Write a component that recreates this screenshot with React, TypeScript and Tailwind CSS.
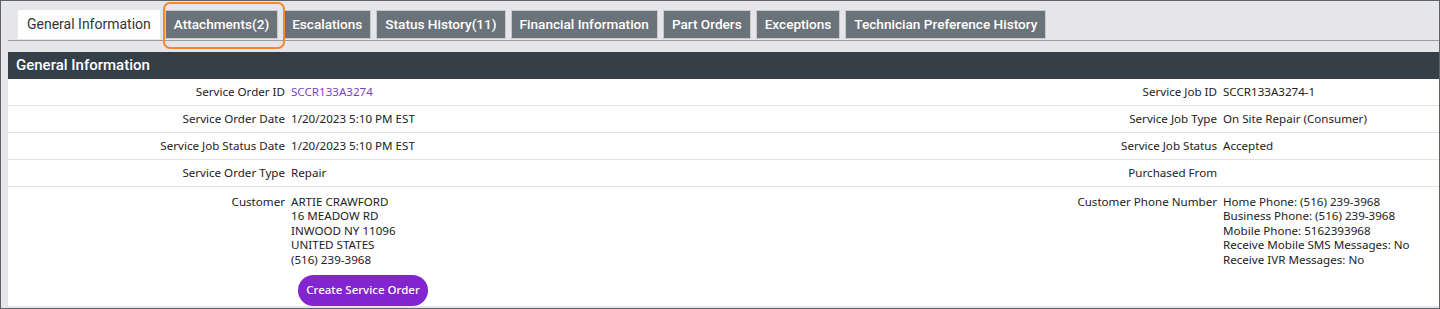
import React from "react";

const TABS = [
  "General Information",
  "Attachments(2)",
  "Escalations",
  "Status History(11)",
  "Financial Information",
  "Part Orders",
  "Exceptions",
  "Technician Preference History",
];

const ROWS: { l1: string; v1: React.ReactNode; l2: string; v2: React.ReactNode }[] = [
  {
    l1: "Service Order ID",
    v1: <span className="text-[#7a3fc8]">SCCR133A3274</span>,
    l2: "Service Job ID",
    v2: "SCCR133A3274-1",
  },
  { l1: "Service Order Date", v1: "1/20/2023 5:10 PM EST", l2: "Service Job Type", v2: "On Site Repair (Consumer)" },
  { l1: "Service Job Status Date", v1: "1/20/2023 5:10 PM EST", l2: "Service Job Status", v2: "Accepted" },
  { l1: "Service Order Type", v1: "Repair", l2: "Purchased From", v2: "" },
];

export default function App() {
  return (
    <div
      className="relative h-[309px] w-[1440px] overflow-hidden border border-[#5d636c] bg-[#e6e5ea] pl-[7px]"
      style={{ fontFamily: "'Noto Sans', Roboto, sans-serif" }}
    >
      {/* tabs */}
      <div className="flex items-end gap-[5px] border-b-[1.5px] border-[#9b9b9b] pb-[1px] pl-[10px] pt-[9px]" style={{ fontFamily: "Roboto, sans-serif" }}>
        {TABS.map((t, i) =>
          i === 0 ? (
            <div key={t} className="flex h-[29px] items-center bg-white px-[9px] text-[14px] text-[#333]">
              {t}
            </div>
          ) : (
            <div
              key={t}
              className="flex h-[29px] items-center border border-[#c9c9c9] bg-[#6b737a] px-[8px] text-[13.6px] font-medium text-white"
            >
              {t}
            </div>
          )
        )}
      </div>

      {/* highlight annotation */}
      <div className="absolute left-[162px] top-[1px] h-[47px] w-[122px] rounded-[7px] border-2 border-[#f28a2a]" />

      {/* panel */}
      <div className="mt-[11px] bg-white text-[11.6px] text-[#222]">
        <div className="flex h-[27px] items-center bg-[#343f48] pl-[8px] text-[15px] font-medium text-white" style={{ fontFamily: "Roboto, sans-serif" }}>
          General Information
        </div>
        {ROWS.map((r) => (
          <div key={r.l1} className="flex h-[27px] items-center border-b border-[#e3e3e3]">
            <div className="w-[277px] text-right">{r.l1}</div>
            <div className="flex-1 pl-[6px]">{r.v1}</div>
            <div className="w-[400px] text-right">{r.l2}</div>
            <div className="w-[222px] pl-[6px]">{r.v2}</div>
          </div>
        ))}
        <div className="flex pt-[8px] leading-[14.4px]">
          <div className="w-[277px] text-right">Customer</div>
          <div className="flex-1 pl-[6px]">
            <div>ARTIE CRAWFORD</div>
            <div>16 MEADOW RD</div>
            <div>INWOOD NY 11096</div>
            <div>UNITED STATES</div>
            <div>(516) 239-3968</div>
            <button className="ml-[7px] mt-[8px] h-[31px] w-[130px] rounded-full bg-[#8224d0] text-[11.5px] font-medium text-white">
              Create Service Order
            </button>
          </div>
          <div className="w-[400px] text-right">Customer Phone Number</div>
          <div className="w-[222px] pl-[6px]">
            <div>Home Phone: (516) 239-3968</div>
            <div>Business Phone: (516) 239-3968</div>
            <div>Mobile Phone: 5162393968</div>
            <div>Receive Mobile SMS Messages: No</div>
            <div>Receive IVR Messages: No</div>
          </div>
        </div>
      </div>
    </div>
  );
}
